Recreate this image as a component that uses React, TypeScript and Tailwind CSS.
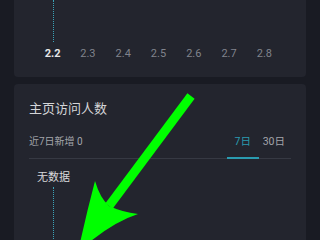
import React from "react";

const days = ["2.2", "2.3", "2.4", "2.5", "2.6", "2.7", "2.8"];

function Arrow(): JSX.Element {
    return (
        <svg className="absolute left-0 top-0" width="320" height="240" viewBox="0 0 320 240">
            <line x1="191" y1="96" x2="109" y2="206" stroke="#00ff00" strokeWidth="9" />
            <path d="M95 181 Q100 198 109 206 Q122 212 138 214 Q110 223 78 252 Q86 215 95 181 Z" fill="#00ff00" />
        </svg>
    );
}

function App(): JSX.Element {
    return (
        <div className="relative w-[320px] h-[240px] overflow-hidden bg-[#191b23] font-['Roboto','Noto_Sans_CJK_SC',sans-serif]">
            <div className="flex flex-col gap-[7px] px-[14px]">
                {/* trend card */}
                <div className="h-[77px] rounded-b-[4px] bg-[#23252e] relative">
                    <div className="absolute left-[39px] top-0 h-[42px] border-l border-dotted border-[#3aa3b8]"></div>
                    <div className="absolute left-[21px] top-[47px] grid grid-cols-7 w-[247px] text-[11px] leading-[14px]">
                        {days.map((d, i) => (
                            <span key={d} className={i === 0 ? "text-center font-bold text-[#e6e6e6]" : "text-center text-[#80838c]"}>{d}</span>
                        ))}
                    </div>
                </div>

                {/* visitors card */}
                <div className="h-[200px] rounded-[4px] bg-[#23252e] px-[15px] relative">
                    <div className="pt-[16px] text-[13px] leading-[18px] text-[#d4d5d8]">主页访问人数</div>
                    <div className="mt-[14px] flex items-end justify-between border-b border-[#363943] h-[27px]">
                        <span className="text-[10px] leading-[20px] pb-[6px] text-[#a2a4aa]">近7日新增 0</span>
                        <div className="flex gap-[4px] text-[10.5px] leading-[20px] mr-[6px]">
                            <span className="relative pb-[6px] w-[32px] text-center text-[#2a9bb0]">
                                7日
                                <span className="absolute left-0 bottom-[-1px] h-[2px] w-[32px] bg-[#2a9bb0]"></span>
                            </span>
                            <span className="pb-[6px] text-[#a2a4aa]">30日</span>
                        </div>
                    </div>
                    <div className="ml-[8px] mt-[12px] text-[11px] leading-[14px] text-[#d8d9dc]">无数据</div>
                    <div className="absolute left-[39px] top-[103px] h-[100px] border-l border-dotted border-[#3aa3b8]"></div>
                </div>
            </div>
            <Arrow />
        </div>
    );
}

export default App;
